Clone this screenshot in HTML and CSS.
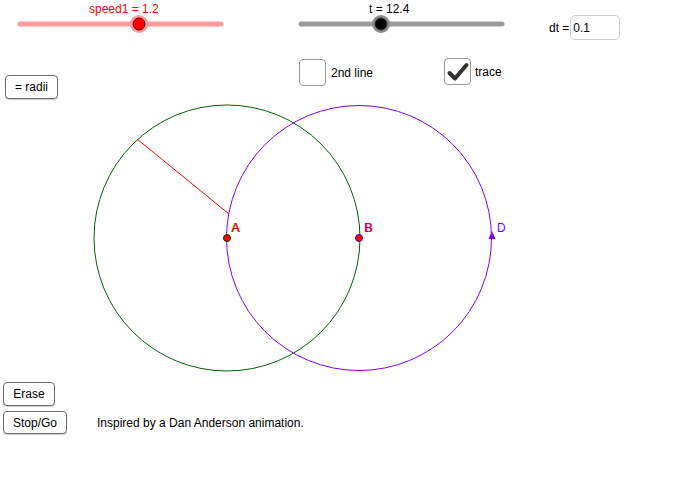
FILE: index.html
```html
<!DOCTYPE html>
<html>
<head>
<meta charset="utf-8">
<link rel="stylesheet" href="styles.css">
</head>
<body>
<div class="stage">
  <svg class="canvas" width="685" height="503" viewBox="0 0 685 503" xmlns="http://www.w3.org/2000/svg">
    <!-- speed1 slider -->
    <text class="slabel red" x="89" y="13">speed1 = 1.2</text>
    <line x1="20" y1="24" x2="221" y2="24" stroke="#ff9a9a" stroke-width="5" stroke-linecap="round"/>
    <circle cx="139" cy="24" r="9" fill="#ff9a9a"/>
    <circle cx="139" cy="24" r="6" fill="#ff0000" stroke="#5a0000" stroke-width="1"/>
    <!-- t slider -->
    <text class="slabel" x="369" y="13">t = 12.4</text>
    <line x1="301" y1="24" x2="502" y2="24" stroke="#9b9b9b" stroke-width="5" stroke-linecap="round"/>
    <circle cx="381" cy="24" r="9" fill="#8a8a8a"/>
    <circle cx="381" cy="24" r="6" fill="#000" stroke="#333" stroke-width="1"/>
    <!-- circles -->
    <circle cx="227" cy="238" r="133" fill="none" stroke="#006400" stroke-width="1"/>
    <circle cx="359" cy="238" r="132.5" fill="none" stroke="#7f00ff" stroke-width="1"/>
    <line x1="137" y1="139" x2="229" y2="214" stroke="#ff0000" stroke-width="1"/>
    <!-- points -->
    <circle cx="227" cy="238" r="3.5" fill="#ff0000" stroke="#004000" stroke-width="1"/>
    <circle cx="359" cy="238" r="3.5" fill="#ff0000" stroke="#5a00b4" stroke-width="1"/>
    <polygon points="492,231 488.5,239 495.5,239" fill="#7f00ff"/>
    <text class="plabel green" x="231" y="232">A</text>
    <text class="plabel red" x="232" y="232">A</text>
    <text class="plabel purple" x="364" y="232">B</text>
    <text class="plabel red" x="365" y="232">B</text>
    <text class="plabel purple" x="497" y="232">D</text>
  </svg>

  <div class="widget dt">
    <span class="dt-label">dt =</span>
    <div class="inputbox">0.1</div>
  </div>

  <label class="widget check check-line">
    <span class="box"></span>
    <span class="ctext">2nd line</span>
  </label>

  <label class="widget check check-trace">
    <span class="box">
      <svg width="24" height="24" viewBox="0 0 24 24"><path d="M3.5 13 L9 18.5 L20.5 5" fill="none" stroke="#333" stroke-width="4" stroke-linecap="round" stroke-linejoin="round"/></svg>
    </span>
    <span class="ctext">trace</span>
  </label>

  <div class="widget radii"><div class="btn btn-radii">= radii</div></div>

  <div class="widget bottom">
    <div class="btn btn-erase">Erase</div>
    <div class="row">
      <div class="btn btn-stop">Stop/Go</div>
      <span class="caption">Inspired by a Dan Anderson animation.</span>
    </div>
  </div>
</div>
</body>
</html>
```

FILE: styles.css
```css
html, body {
  margin: 0;
  padding: 0;
  background: #ffffff;
}
body {
  font-family: "Liberation Sans", Arial, sans-serif;
  font-size: 12px;
  color: #000;
}
.stage {
  position: relative;
  width: 685px;
  height: 503px;
  overflow: hidden;
}
.canvas {
  position: absolute;
  left: 0;
  top: 0;
  display: block;
}
.slabel {
  font-family: "Liberation Sans", Arial, sans-serif;
  font-size: 12px;
  fill: #000;
}
.plabel {
  font-family: "Liberation Sans", Arial, sans-serif;
  font-size: 12px;
}
.red { fill: #ff0000; }
.green { fill: #008000; }
.purple { fill: #7f00ff; }

.widget {
  position: absolute;
}
.dt {
  left: 549px;
  top: 15px;
  display: flex;
  align-items: center;
  gap: 1px;
}
.dt-label {
  line-height: 14px;
  padding-top: 1px;
}
.inputbox {
  box-sizing: border-box;
  width: 50px;
  height: 25px;
  border: 1px solid #d0d0d0;
  border-radius: 5px;
  padding: 5px 0 0 2px;
  line-height: 14px;
}
.check {
  display: flex;
  align-items: center;
  gap: 5px;
}
.check-line { left: 299px; top: 59px; }
.check-trace { left: 444px; top: 58px; gap: 4px; }
.box {
  box-sizing: border-box;
  width: 27px;
  height: 27px;
  border: 1.5px solid #9a9a9a;
  border-radius: 4px;
  display: flex;
  align-items: center;
  justify-content: center;
}
.ctext {
  line-height: 14px;
  margin-top: 1px;
}
.btn {
  box-sizing: border-box;
  border: 1.5px solid #6e6e6e;
  border-radius: 4px;
  box-shadow: 0 1px 1px rgba(0,0,0,0.2);
  display: flex;
  align-items: center;
  justify-content: center;
  line-height: 14px;
  background: #fff;
}
.radii { left: 5px; top: 75px; }
.btn-radii { width: 53px; height: 24px; }
.bottom {
  left: 3px;
  top: 382px;
  display: flex;
  flex-direction: column;
  gap: 5px;
}
.btn-erase { width: 52px; height: 24px; }
.row {
  display: flex;
  align-items: center;
  gap: 30px;
}
.btn-stop { width: 64px; height: 23px; }
.caption {
  line-height: 14px;
}
```
